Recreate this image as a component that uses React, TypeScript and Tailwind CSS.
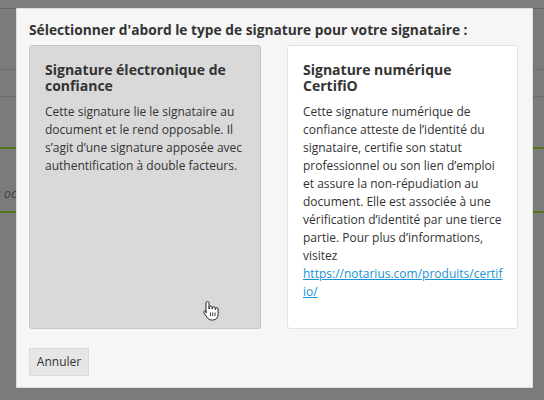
import React from 'react';

function HandCursor() {
  return (
    <svg width="18" height="22" viewBox="0 0 18 22" className="absolute left-[172px] top-[254px]">
      <path
        d="M5.5 1.5c1 0 1.5.7 1.5 1.6V9h.3V7.4c0-.9.6-1.4 1.4-1.4s1.4.5 1.4 1.4V9h.3V8.1c0-.9.6-1.4 1.4-1.4s1.4.5 1.4 1.4V9.5h.3V9c0-.9.6-1.3 1.3-1.3s1.3.5 1.3 1.3v5.3c0 3.3-2 5.7-5.2 5.7H9.6c-2 0-3.2-.9-4.3-2.4L2 13.1c-.5-.7-.4-1.5.2-2 .6-.5 1.4-.4 2 .2L4 12.9V3.1c0-.9.5-1.6 1.5-1.6z"
        fill="#fff"
        stroke="#222"
        strokeWidth="1"
        strokeLinejoin="round"
      />
      <path d="M8.4 12.5v3.5M10.7 12.5v3.5M13 12.5v3.5" stroke="#222" strokeWidth="0.9" />
    </svg>
  );
}

export default function App() {
  return (
    <div
      className="relative w-[544px] h-[400px] overflow-hidden bg-[#7b7b7b] text-[#333]"
      style={{ fontFamily: '"Open Sans", "Liberation Sans", sans-serif' }}
    >
      {/* page behind the overlay */}
      <div className="flex flex-col">
        <div className="h-[9px] bg-[#7e7e7e] border-b border-[#666]" />
        <div className="h-[60px]" />
        <div className="h-px bg-[#6c6c6c]" />
        <div className="h-[26px]" />
        <div className="h-px bg-[#6c6c6c]" />
        <div className="h-[50px]" />
        <div className="h-[2px] bg-[#58741f]" />
        <div className="h-[62px] pt-[31px]">
          <span className="italic text-[13px] leading-[18px] text-[#3f3f3f] -ml-[4px]">t oc</span>
        </div>
        <div className="h-[2px] bg-[#58741f]" />
      </div>

      {/* modal */}
      <div className="absolute left-[16px] top-[8px] w-[517px] h-[380px] bg-[#f6f6f6] border border-[#dcdcdc] px-[12px] pt-[11px] flex flex-col">
        <h2 className="text-[13.75px] leading-[20px] font-bold text-[#333] mb-[5px]">
          Sélectionner d'abord le type de signature pour votre signataire :
        </h2>
        <div className="flex gap-[26px] h-[284px]">
          <div className="relative w-[232px] bg-[#d9d9d9] border border-[#c6c6c6] rounded-[3px] pt-[16px] px-[15px]">
            <h3 className="text-[14px] leading-[16px] font-bold text-[#333] mb-[9px]">
              Signature électronique de confiance
            </h3>
            <p className="text-[12px] leading-[18px]">
              Cette signature lie le signataire au document et le rend opposable. Il s’agit d’une signature apposée avec authentification à double facteurs.
            </p>
            <HandCursor />
          </div>
          <div className="w-[231px] bg-white border border-[#e2e2e2] rounded-[3px] pt-[16px] pl-[15px] pr-[12px]">
            <h3 className="text-[14px] leading-[16px] font-bold text-[#333] mb-[9px]">
              Signature numérique CertifiO
            </h3>
            <p className="text-[12px] leading-[18px] [overflow-wrap:break-word]">
              Cette signature numérique de confiance atteste de l’identité du signataire, certifie son statut professionnel ou son lien d’emploi et assure la non-répudiation au document. Elle est associée à une vérification d’identité par une tierce partie. Pour plus d’informations, visitez{' '}
              <a href="#" className="text-[#1b93d8] underline">
                https://notarius.com/produits/certifio/
              </a>
            </p>
          </div>
        </div>
        <div className="mt-[19px]">
          <button className="h-[28px] w-[60px] bg-[#e6e6e6] border border-[#dadada] text-[12px] text-[#333]">
            Annuler
          </button>
        </div>
      </div>
    </div>
  );
}
